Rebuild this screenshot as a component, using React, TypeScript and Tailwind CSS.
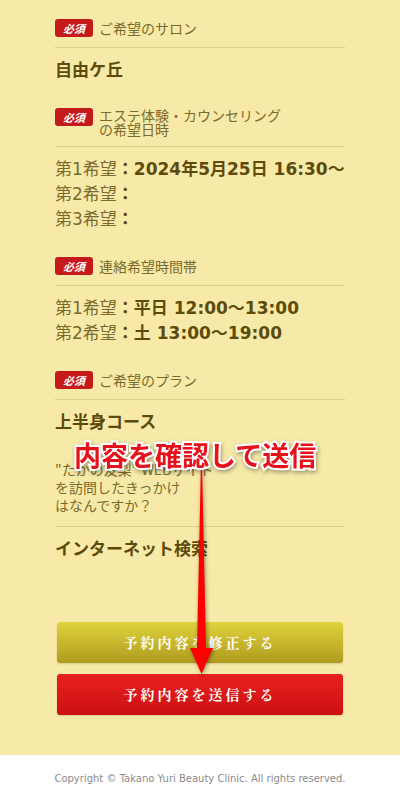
import type { ReactNode } from 'react';

function Badge() {
  return (
    <span className="flex h-[18px] w-[38px] shrink-0 items-center justify-center rounded-[3px] bg-[#c51a1c] text-[11px] font-bold italic leading-none text-white">
      必須
    </span>
  );
}

interface SectionProps {
  label: ReactNode;
  required?: boolean;
  first?: boolean;
  children: ReactNode;
}

function Section({ label, required = true, first = false, children }: SectionProps) {
  return (
    <div className={first ? '' : 'mt-[25px]'}>
      {/* Label row */}
      <div className={`flex items-start gap-[6px] border-b border-[#dccf86] ${required ? 'pb-[10px]' : 'pb-[12px]'}`}>
        {required && <Badge />}
        <div className="text-[14px] leading-[18px] text-[#7a6a2c]">{label}</div>
      </div>
      {/* Value */}
      <div className="pt-[10px] font-['DejaVu_Sans','Noto_Sans_CJK_JP',sans-serif] text-[17px] leading-[25px] text-[#5e4b0c]">
        {children}
      </div>
    </div>
  );
}

function Choice({ n, value }: { n: number; value?: string }) {
  return (
    <div>
      <span className="text-[#7a6a2c]">第{n}希望</span>
      <span className="font-bold">：{value}</span>
    </div>
  );
}

export default function App() {
  return (
    <div className="min-h-[800px] w-[400px] bg-white font-['Noto_Sans_CJK_JP',sans-serif]">
      <div className="relative bg-[#f7eaa8] px-[55px] pb-[40px] pt-[19px]">
        <Section first label="ご希望のサロン">
          <div className="font-bold">自由ケ丘</div>
        </Section>

        <Section label={<span className="block leading-[14px]">エステ体験・カウンセリング<br />の希望日時</span>}>
          <Choice n={1} value="2024年5月25日 16:30～" />
          <Choice n={2} />
          <Choice n={3} />
        </Section>

        <Section label="連絡希望時間帯">
          <Choice n={1} value="平日 12:00～13:00" />
          <Choice n={2} value="土 13:00～19:00" />
        </Section>

        <Section label="ご希望のプラン">
          <div className="font-bold">上半身コース</div>
        </Section>

        <Section
          required={false}
          label={
            <>
              "たかの友梨" WEBサイト
              <br />
              を訪問したきっかけ
              <br />
              はなんですか？
            </>
          }
        >
          <div className="font-bold">インターネット検索</div>
        </Section>

        {/* Buttons */}
        <div className="mx-[2px] mt-[60px] flex flex-col gap-[11px] font-['Noto_Serif_CJK_JP','Liberation_Serif',serif]">
          <button className="h-[41px] rounded-[3px] bg-gradient-to-b from-[#e0d33c] to-[#b09b1f] text-[14px] font-bold tracking-[3px] text-white shadow-[0_1px_2px_rgba(0,0,0,0.15)]">
            予約内容を修正する
          </button>
          <button className="h-[41px] rounded-[3px] bg-gradient-to-b from-[#e82020] to-[#cc1010] text-[14px] font-bold tracking-[3px] text-white shadow-[0_1px_2px_rgba(0,0,0,0.15)]">
            予約内容を送信する
          </button>
        </div>

        {/* Annotation overlay */}
        <div className="absolute left-[74px] top-[441px] whitespace-nowrap text-[27px] font-bold leading-none text-[#e5121b] [-webkit-text-stroke:4px_white] [paint-order:stroke_fill] [filter:drop-shadow(1px_2px_2px_rgba(0,0,0,0.35))]">
          内容を確認して送信
        </div>
        <svg
          className="absolute left-[180px] top-[465px] [filter:drop-shadow(1px_1px_2px_rgba(0,0,0,0.4))]"
          width="40"
          height="215"
          viewBox="0 0 40 215"
        >
          <polygon points="20.8,5 22.2,5 26,183 33,183 21.5,209 10,183 17,183" fill="#ff0000" />
        </svg>
      </div>

      <footer className="pt-[16px] text-center font-['DejaVu_Sans',sans-serif] text-[10px] text-[#8a8a8a]">
        Copyright © Takano Yuri Beauty Clinic. All rights reserved.
      </footer>
    </div>
  );
}
